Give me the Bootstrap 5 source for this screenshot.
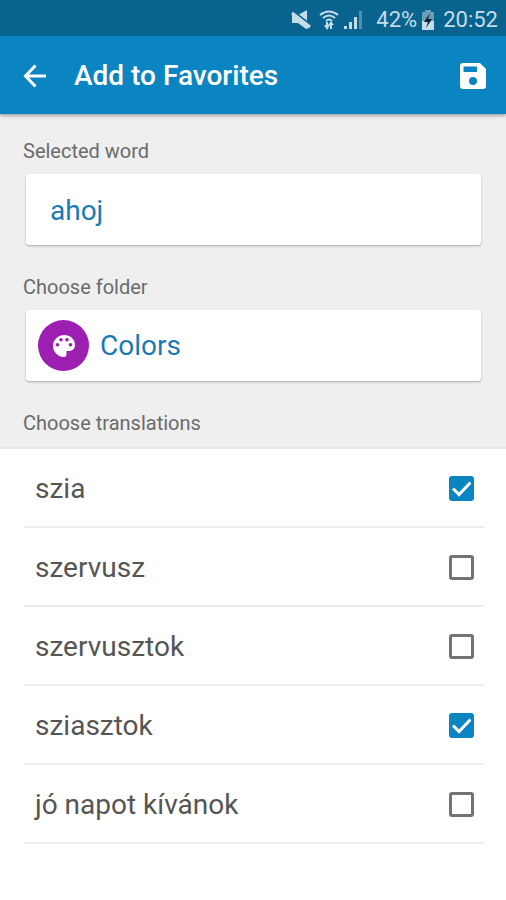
<!DOCTYPE html>
<html lang="en">
<head>
<meta charset="utf-8">
<meta name="viewport" content="width=device-width, initial-scale=1">
<title>Add to Favorites</title>
<link href="https://cdn.jsdelivr.net/npm/bootstrap@5.3.0/dist/css/bootstrap.min.css" rel="stylesheet">
<style>
  body { font-family: Roboto, "Liberation Sans", sans-serif; background: #fff; color: #555; }
  .status-bar { background: #08638f; color: #c6dce7; height: 36px; padding: 3px 8px 0 0; font-size: 22px; line-height: 32px; }
  .app-bar { background: #0a85c1; height: 78px; padding: 2px 18px 0 20px; box-shadow: 0 2px 3px rgba(0,0,0,.3); }
  .app-title { font-size: 28px; line-height: 32px; font-weight: 500; margin-left: 24px; }
  .tool-btn { width: 30px; height: 32px; }
  .word-form { background: #efefef; padding: 25px 24px 12px 23px; border-bottom: 2px solid #e8e8e8; }
  .field-label { font-size: 20px; line-height: 24px; color: #6b6b6b; }
  .field-box { height: 71px; margin: 11px 1px 30px 3px; border-radius: 3px; box-shadow: 0 1px 2px rgba(0,0,0,.3); font-size: 28px; color: #1b7ab5; }
  .word-input { padding: 2px 24px 0; color: #1b7ab5; font-size: 28px; }
  .folder-btn { padding: 0 12px; color: #1b7ab5; font-size: 28px; }
  .folder-icon { width: 51px; height: 51px; background: #9c1fb1; }
  .folder-name { margin-left: 11px; }
  .translations { padding: 0 22px 0 24px; }
  .translation-row { height: 79px; padding: 2px 10px 0 11px; border-bottom: 2px solid #eee; font-size: 28px; }
  .translation-row .form-check-input { width: 25px; height: 25px; margin: 0; border: 3px solid #737373; border-radius: 3px; }
  .translation-row .form-check-input:checked {
    background-color: #0a85c1; border-color: #0a85c1; background-size: 25px 25px; background-origin: border-box;
    background-image: url("data:image/svg+xml,%3csvg xmlns='http://www.w3.org/2000/svg' viewBox='0 0 25 25'%3e%3cpath d='M4 12.5l6 6L21.500 6.500' fill='none' stroke='white' stroke-width='3'/%3e%3c/svg%3e");
  }
</style>
</head>
<body>
<div class="status-bar d-flex align-items-center justify-content-end">
  <svg width="20" height="20" viewBox="0 0 20 20" aria-hidden="true"><path d="M1 5h6l9-5v12l2 6-3 1-8-6H1z" fill="#c6dce7"/><path d="M2 1l18 14" stroke="#08638f" stroke-width="2"/><path d="M1 3l18 14" stroke="#c6dce7" stroke-width="3"/></svg>
  <svg class="ms-2" width="20" height="20" viewBox="0 0 20 20" aria-hidden="true"><path d="M1 5q9-7 18 0M4 8q6-5 12 0M7 11q3-3 6 0" fill="none" stroke="#c6dce7" stroke-width="2"/><path d="M8 12v5M12 14v5" stroke="#c6dce7" stroke-width="2"/><path d="M5 15h6l-3 5zM9 15l3-4 3 4z" fill="#c6dce7"/></svg>
  <svg class="ms-1" width="21" height="20" viewBox="0 0 21 20" aria-hidden="true"><path d="M1 16h3v3H1zM6 12h3v7H6zM11 7h3v12h-3z" fill="#c6dce7"/><path d="M16 1h3v18h-3z" fill="#4f8faf"/></svg>
  <span class="ms-2 ps-1">42%</span>
  <svg class="ms-1" width="14" height="20" viewBox="0 0 14 20" aria-hidden="true"><path d="M4 0h6v2h3v18H1V2h3z" fill="#6b9db8"/><path d="M1 11h12v9H1z" fill="#c6dce7"/><path d="M9 3L3 12h4l-2 6 6-9H7z" fill="#062333"/></svg>
  <span class="ms-2">20:52</span>
</div>
<header class="app-bar position-relative d-flex align-items-center text-white">
  <button type="button" class="tool-btn btn p-0 border-0 text-white d-flex align-items-center justify-content-center" aria-label="Back">
    <svg width="24" height="24" viewBox="0 0 24 24" fill="none" stroke="currentColor" stroke-width="3"><path d="M23 12H2.500M12.500 1.500L2.500 12l10 10.500"/></svg>
  </button>
  <h1 class="app-title mb-0 flex-grow-1">Add to Favorites</h1>
  <button type="button" class="tool-btn btn p-0 border-0 text-white d-flex align-items-center justify-content-center" aria-label="Save">
    <svg width="28" height="28" viewBox="0 0 28 28"><path fill="currentColor" fill-rule="evenodd" d="M4 1h17l6 6v17a3 3 0 0 1-3 3H4a3 3 0 0 1-3-3V4a3 3 0 0 1 3-3zM4.500 4.500v5.500H18V4.500zM14 15a4 4 0 1 0 0 8 4 4 0 0 0 0-8z"/></svg>
  </button>
</header>
<main>
  <form>
    <div class="word-form">
      <label class="field-label d-block" for="word">Selected word</label>
      <div class="field-box bg-white">
        <input type="text" id="word" class="word-input form-control border-0 bg-transparent shadow-none h-100" value="ahoj">
      </div>
      <label class="field-label d-block" for="folder">Choose folder</label>
      <div class="field-box bg-white">
        <button type="button" id="folder" class="folder-btn btn border-0 w-100 h-100 d-flex align-items-center text-start">
          <span class="folder-icon rounded-circle d-flex align-items-center justify-content-center">
            <svg width="22" height="22" viewBox="0 0 22 22" aria-hidden="true"><path fill="#fff" fill-rule="evenodd" d="M11 0C17 0 22 4 22 10c0 3.500-2.500 6-6 6h-2.500v3c0 2-1 3-2.500 3C5 22 0 17 0 11S5 0 11 0zM4.500 8a1.800 1.800 0 1 0 0 3.600 1.800 1.800 0 0 0 0-3.600zM8 3a1.800 1.800 0 1 0 0 3.600A1.800 1.800 0 0 0 8 3zM14 3a1.800 1.800 0 1 0 0 3.600A1.800 1.800 0 0 0 14 3zM17.500 8a1.800 1.800 0 1 0 0 3.600 1.800 1.800 0 0 0 0-3.600z"/></svg>
          </span>
          <span class="folder-name">Colors</span>
        </button>
      </div>
      <div class="field-label" id="translations-label">Choose translations</div>
    </div>
    <div class="translations" role="group" aria-labelledby="translations-label">
      <div class="translation-row d-flex align-items-center"><label class="flex-grow-1" for="t1">szia</label><input class="form-check-input" type="checkbox" id="t1" checked></div>
      <div class="translation-row d-flex align-items-center"><label class="flex-grow-1" for="t2">szervusz</label><input class="form-check-input" type="checkbox" id="t2"></div>
      <div class="translation-row d-flex align-items-center"><label class="flex-grow-1" for="t3">szervusztok</label><input class="form-check-input" type="checkbox" id="t3"></div>
      <div class="translation-row d-flex align-items-center"><label class="flex-grow-1" for="t4">sziasztok</label><input class="form-check-input" type="checkbox" id="t4" checked></div>
      <div class="translation-row d-flex align-items-center"><label class="flex-grow-1" for="t5">jó napot kívánok</label><input class="form-check-input" type="checkbox" id="t5"></div>
    </div>
  </form>
</main>
<script src="https://cdn.jsdelivr.net/npm/bootstrap@5.3.0/dist/js/bootstrap.bundle.min.js"></script>
</body>
</html>
